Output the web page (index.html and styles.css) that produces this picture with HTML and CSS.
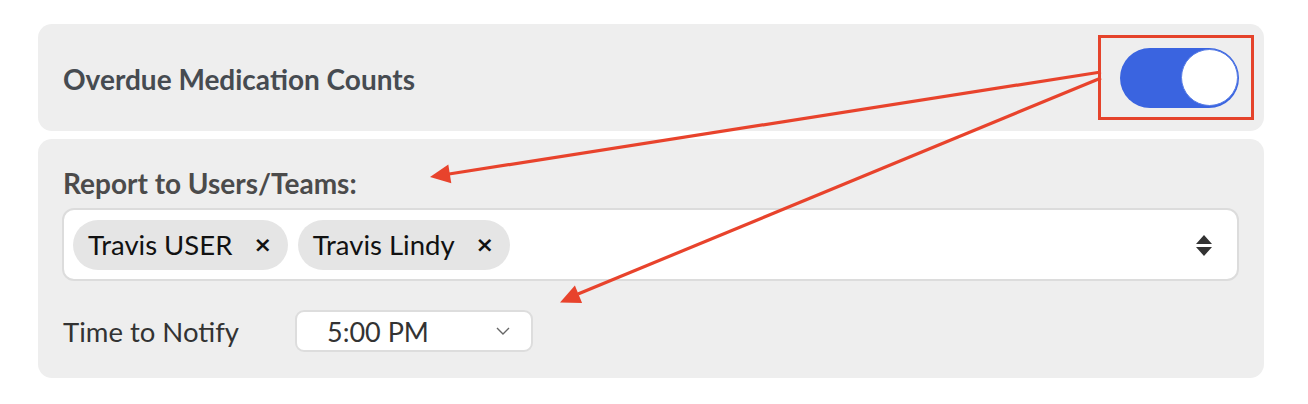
FILE: index.html
```html
<!DOCTYPE html>
<html>
<head>
<meta charset="utf-8">
<link rel="stylesheet" href="styles.css">
</head>
<body>
<div class="page">
  <section class="card header-card">
    <h2 class="title">Overdue Medication Counts</h2>
    <div class="highlight">
      <div class="toggle"><span class="knob"></span></div>
    </div>
  </section>
  <section class="card body-card">
    <div class="label">Report to Users/Teams:</div>
    <div class="multi">
      <div class="chips">
        <span class="chip"><span class="chip-text">Travis USER</span><span class="chip-x">×</span></span>
        <span class="chip"><span class="chip-text">Travis Lindy</span><span class="chip-x">×</span></span>
      </div>
      <svg class="sort" width="16" height="22" viewBox="0 0 16 22"><path d="M8 0 L16 9 L0 9 Z M0 12 L16 12 L8 21 Z" fill="#333"/></svg>
    </div>
    <div class="time-row">
      <span class="time-label">Time to Notify</span>
      <div class="select">
        <span class="select-value">5:00 PM</span>
        <svg class="chev" width="14" height="8" viewBox="0 0 14 8"><path d="M1 1 L7 7 L13 1" fill="none" stroke="#666" stroke-width="1.4"/></svg>
      </div>
    </div>
  </section>
  <svg class="annotations" width="1308" height="404" viewBox="0 0 1308 404">
    <g fill="#e8432c" stroke="#e8432c">
      <line x1="1101" y1="72" x2="449" y2="174" stroke-width="3.2"/>
      <polygon points="430,177 451.3,183.3 448.3,164.5" stroke="none"/>
      <line x1="1101" y1="78" x2="578" y2="294" stroke-width="3.2"/>
      <polygon points="560,302.5 582.1,303.1 574.9,285.5" stroke="none"/>
    </g>
  </svg>
</div>
</body>
</html>
```
FILE: styles.css
```css
* { box-sizing: border-box; }
html, body { margin: 0; padding: 0; background: #ffffff; }
body { font-family: Lato, "Open Sans", sans-serif; }

.page {
  position: relative;
  width: 1308px;
  height: 404px;
  padding: 24px 44px 0 38px;
  display: flex;
  flex-direction: column;
  gap: 8px;
}

.card {
  background: #eeeeee;
  border-radius: 14px;
}

.header-card {
  height: 107px;
  display: flex;
  align-items: center;
  justify-content: space-between;
  padding: 0 10px 0 25px;
}

.title {
  margin: 0;
  font-size: 28px;
  font-weight: 700;
  color: #464b51;
  margin-top: 2px;
}

.highlight {
  border: 3px solid #e5432b;
  padding: 10px 12px 9px 19px;
  margin-top: -1px;
}

.toggle {
  width: 119px;
  height: 60px;
  border-radius: 30px;
  background: #3a64e0;
  display: flex;
  justify-content: flex-end;
  align-items: center;
  padding: 0 1px;
}

.knob {
  width: 57px;
  height: 57px;
  border-radius: 50%;
  background: #ffffff;
  border: 1px solid #5a7fe6;
}

.body-card {
  height: 239px;
  padding: 28px 25px 0 24px;
  display: flex;
  flex-direction: column;
}

.label {
  font-size: 28px;
  font-weight: 700;
  color: #4b4b4b;
  line-height: 32px;
  margin-left: 1px;
}

.multi {
  margin-top: 9px;
  height: 73px;
  background: #ffffff;
  border: 2px solid #dcdcdc;
  border-radius: 12px;
  display: flex;
  align-items: center;
  justify-content: space-between;
  padding: 0 25px 0 9px;
}

.chips {
  display: flex;
  gap: 10px;
}

.chip {
  height: 50px;
  border-radius: 25px;
  background: #e5e5e5;
  display: flex;
  align-items: center;
  padding: 0 16px 0 15px;
  color: #111111;
}

.chip-text {
  font-size: 27.5px;
}

.chip-x {
  margin-left: 21px;
  font-size: 22px;
  font-weight: 700;
  font-family: "DejaVu Sans", sans-serif;
  line-height: 1;
}

.sort { display: block; margin-top: 2px; }

.time-row {
  margin-top: 29px;
  display: flex;
  align-items: center;
}

.time-label {
  font-size: 27.5px;
  color: #333333;
  width: 232px;
  margin-left: 1px;
}

.select {
  width: 238px;
  height: 42px;
  background: #ffffff;
  border: 2px solid #dddddd;
  border-radius: 9px;
  display: flex;
  align-items: center;
  justify-content: space-between;
  padding: 0 21px 0 30px;
}

.select-value {
  font-size: 27px;
  color: #333333;
}

.chev { display: block; }

.annotations {
  position: absolute;
  left: 0;
  top: 0;
  pointer-events: none;
}
```
